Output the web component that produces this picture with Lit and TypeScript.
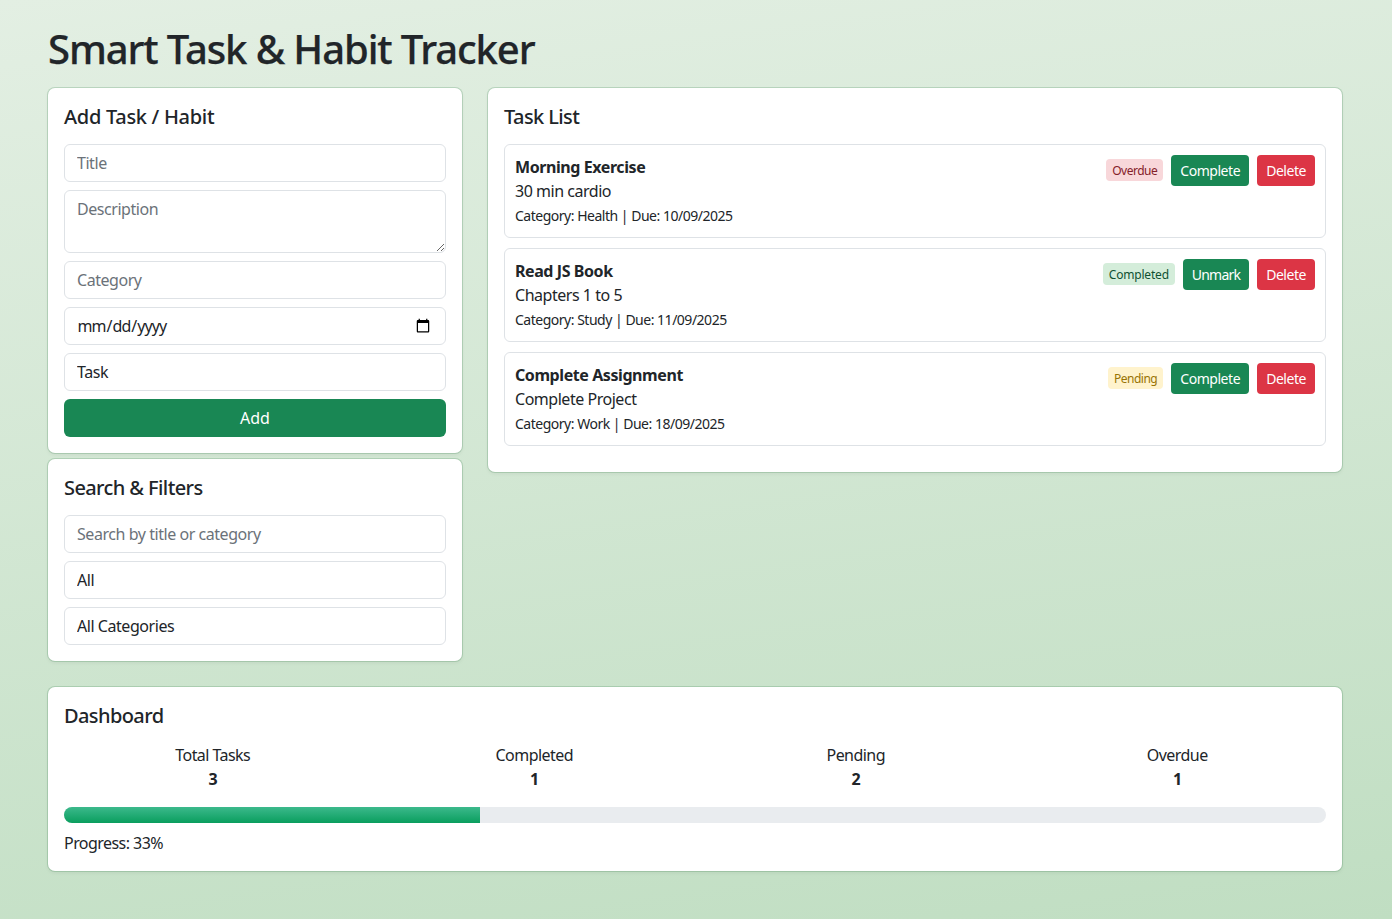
import { LitElement, html, css } from "lit";
import { customElement } from "lit/decorators.js";

type Status = "overdue" | "completed" | "pending";
interface Task { title: string; desc: string; cat: string; due: string; status: Status; label: string; action: string; }

const TASKS: Task[] = [
  { title: "Morning Exercise", desc: "30 min cardio", cat: "Health", due: "10/09/2025", status: "overdue", label: "Overdue", action: "Complete" },
  { title: "Read JS Book", desc: "Chapters 1 to 5", cat: "Study", due: "11/09/2025", status: "completed", label: "Completed", action: "Unmark" },
  { title: "Complete Assignment", desc: "Complete Project", cat: "Work", due: "18/09/2025", status: "pending", label: "Pending", action: "Complete" },
];
const STATS = [["Total Tasks", 3], ["Completed", 1], ["Pending", 2], ["Overdue", 1]] as const;

@customElement("app-root")
export class AppRoot extends LitElement {
  static styles = css`
    :host { display: block; min-height: 919px; box-sizing: border-box; padding: 24px 50px 48px 48px;
      background: linear-gradient(172deg, #e3efe3 0%, #c0dec2 100%);
      font-family: "Noto Sans", "Liberation Sans", sans-serif; font-size: 16px; line-height: 24px; color: #212529; }
    * { box-sizing: border-box; }
    h1 { margin: 0 0 16px; padding-top: 1px; height: 48px; font-size: 40px; line-height: 48px; font-weight: 500; letter-spacing: -1.1px; -webkit-text-stroke: 0.25px #212529; }
    h2 { margin: 0 0 15px; padding-top: 1px; height: 25px; font-size: 20px; line-height: 24px; font-weight: 500; letter-spacing: -0.6px; }
    h2.wide { letter-spacing: -0.3px; }
    .columns { display: grid; grid-template-columns: 414px 1fr; gap: 26px; margin-bottom: 26px; align-items: start; }
    .stack { display: flex; flex-direction: column; gap: 6px; }
    .card { background: #fff; border-radius: 7px; padding: 16px; box-shadow: 0 0 0 1px rgba(70,140,90,.25), 0 2px 4px rgba(0,0,0,.06); }
    .form { display: flex; flex-direction: column; gap: 8px; }
    .field { display: block; width: 100%; height: 38px; padding: 6px 12px; border: 1px solid #dee2e6; border-radius: 6px; background: #fff;
      font: inherit; letter-spacing: -0.45px; color: #212529; outline: none; appearance: none; }
    .field::placeholder { color: #6b7279; opacity: 1; }
    .date { letter-spacing: -0.95px; padding-left: 11.5px; }
    textarea.field { height: 63px; resize: vertical; }
    .add { height: 38px; border: 0; border-radius: 6px; background: #198754; color: #fff; font: inherit; }
    .item { border: 1px solid #dee2e6; border-radius: 6px; padding: 10px; margin-bottom: 10px; display: flex; justify-content: space-between; }
    .name { font-weight: 700; letter-spacing: -0.42px; }
    .desc { letter-spacing: -0.47px; }
    .meta { font-size: 14px; padding-top: 1px; height: 24px; line-height: 23px; letter-spacing: -0.49px; }
    .actions { display: flex; align-items: flex-start; gap: 8px; }
    .badge { margin-top: 4px; height: 22px; padding: 0 6px; border-radius: 4px; font-size: 12px; line-height: 23px; letter-spacing: -0.5px; }
    .overdue { background: #f8d7da; color: #842029; }
    .completed { background: #d4edda; color: #0f5132; letter-spacing: -0.2px; }
    .pending { background: #fff3cd; color: #997404; }
    .btn { height: 31px; padding: 0 9px; border: 0; border-radius: 4px; font: inherit; font-size: 14px; letter-spacing: -0.45px; color: #fff; }
    .btn.unmark { letter-spacing: -0.8px; }
    .ok { background: #198754; }
    .del { background: #dc3545; }
    .stats { display: grid; grid-template-columns: repeat(4, 1fr); margin: 0 -12px 16px; text-align: center; }
    .stats div { letter-spacing: -0.55px; }
    .stats b { display: block; font-weight: 700; }
    .track { height: 16px; border-radius: 8px; overflow: hidden; background: #e9ecef; margin-bottom: 8px; }
    .bar { height: 100%; background: linear-gradient(180deg, #3cb98c, #0a9e5e); }
    .progress-text { letter-spacing: -0.55px; }
  `;

  render() {
    return html`
      <h1>Smart Task &amp; Habit Tracker</h1>
      <div class="columns">
        <div class="stack">
          <section class="card">
            <h2 class="wide">Add Task / Habit</h2>
            <div class="form">
              <input class="field" placeholder="Title" />
              <textarea class="field" placeholder="Description"></textarea>
              <input class="field" placeholder="Category" />
              <input class="field date" type="date" />
              <select class="field"><option>Task</option><option>Habit</option></select>
              <button class="add">Add</button>
            </div>
          </section>
          <section class="card">
            <h2>Search &amp; Filters</h2>
            <div class="form">
              <input class="field" placeholder="Search by title or category" />
              <select class="field"><option>All</option></select>
              <select class="field"><option>All Categories</option></select>
            </div>
          </section>
        </div>
        <section class="card">
          <h2>Task List</h2>
          ${TASKS.map((t) => html`
            <article class="item">
              <div>
                <div class="name">${t.title}</div>
                <div class="desc">${t.desc}</div>
                <div class="meta">Category: ${t.cat} | Due: ${t.due}</div>
              </div>
              <div class="actions">
                <span class="badge ${t.status}">${t.label}</span>
                <button class="btn ok ${t.action.toLowerCase()}">${t.action}</button>
                <button class="btn del">Delete</button>
              </div>
            </article>`)}
        </section>
      </div>
      <section class="card">
        <h2>Dashboard</h2>
        <div class="stats">
          ${STATS.map(([label, n]) => html`<div>${label}<b>${n}</b></div>`)}
        </div>
        <div class="track"><div class="bar" style="width:33%"></div></div>
        <div class="progress-text">Progress: 33%</div>
      </section>
    `;
  }
}
